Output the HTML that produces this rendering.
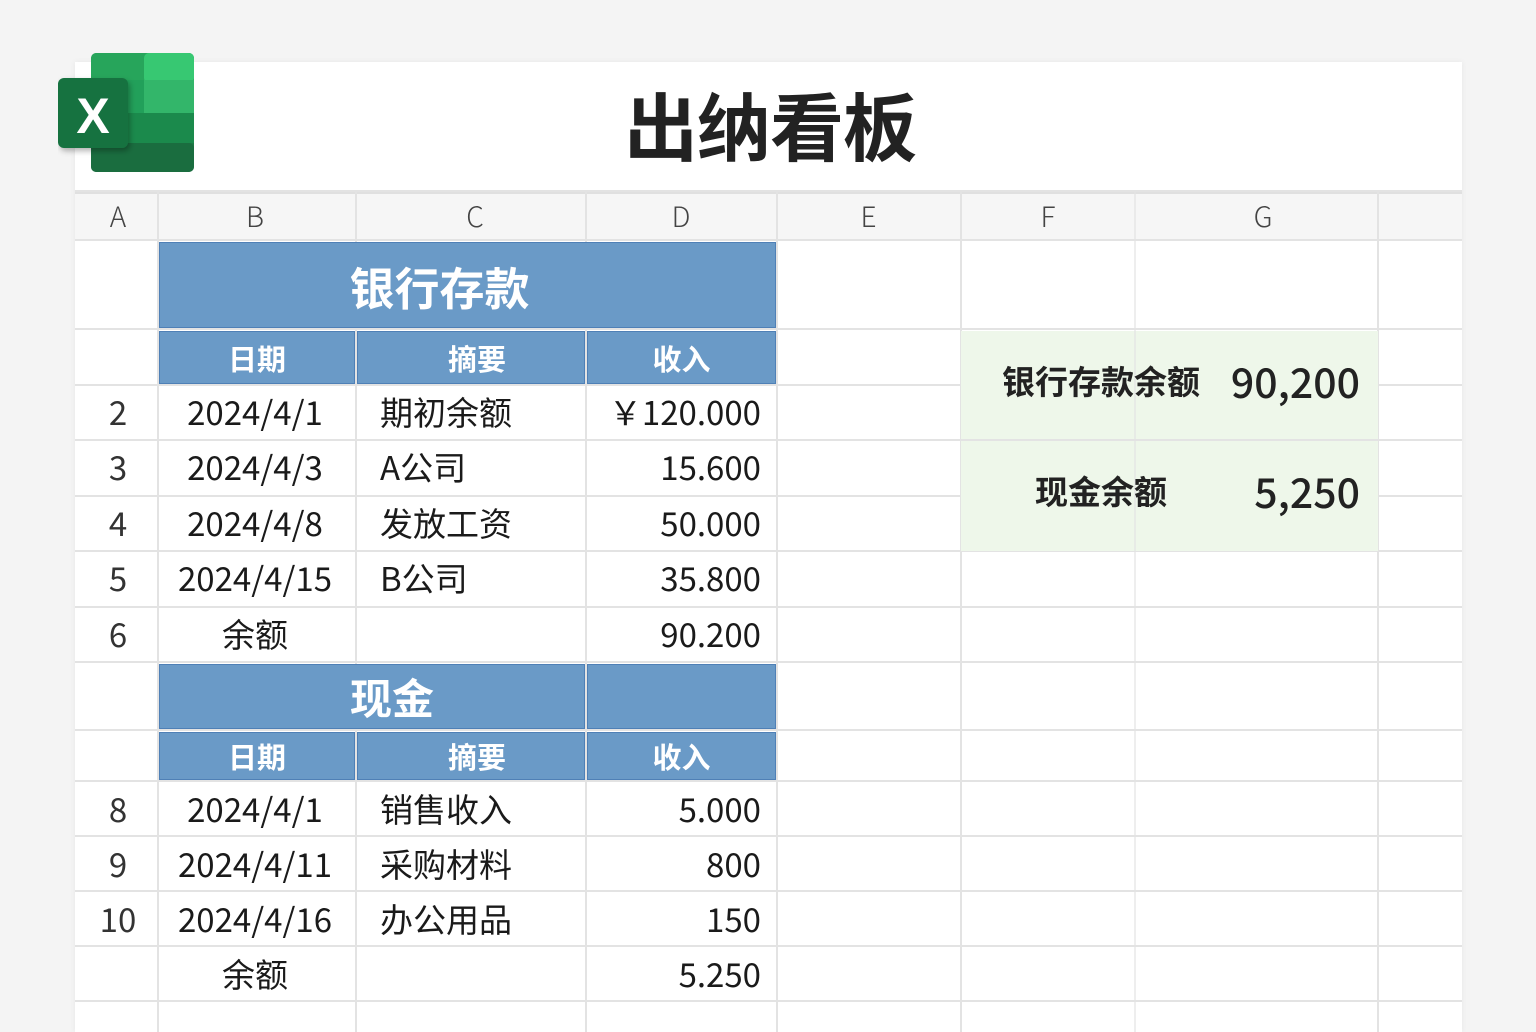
<!DOCTYPE html>
<html><head><meta charset="utf-8"><style>
*{margin:0;padding:0;box-sizing:border-box}
body{width:1536px;height:1024px;background:#f4f4f4;position:relative;overflow:hidden;font-family:"Liberation Sans","Noto Sans CJK SC",sans-serif;color:#1a1a1a}
.sheet{position:absolute;left:75px;top:62px;width:1387px;height:970px;background:#fff;box-shadow:0 0 6px rgba(0,0,0,.06)}
.title{position:absolute;left:600px;top:70px;width:340px;text-align:center;font:bold 74px "Noto Sans CJK SC",sans-serif;color:#222;letter-spacing:-1px}
.hl{position:absolute;left:75px;width:1387px;height:2px;background:#e3e3e3}
.vl{position:absolute;top:192px;width:2px;height:840px;background:#e3e3e3}
.colhdr{position:absolute;top:192px;left:75px;width:1387px;height:48px;background:#f6f6f6;border-top:2px solid #e0e0e0}
.c{position:absolute;display:flex;align-items:center;font-family:"Noto Sans CJK SC",sans-serif;font-size:33px;white-space:nowrap}
.ch{justify-content:center;font-size:28px;color:#444;font-weight:300}
.blue{position:absolute;background:#6a9ac7;border:1px solid #4f80b6;color:#fff;font-weight:bold;display:flex;align-items:center;justify-content:center;font-family:"Noto Sans CJK SC",sans-serif}
.num{justify-content:center;color:#333}
.r{justify-content:flex-end}
.green{position:absolute;left:961px;top:331px;width:417px;height:220px;background:#eef7ea;z-index:1}
.b{font-weight:bold;color:#222;z-index:2}
</style></head><body>
<div class="sheet"></div>
<div class="title">出纳看板</div>

<svg style="position:absolute;left:58px;top:52px" width="140" height="124" viewBox="0 0 140 124">
<defs><filter id="s" x="-20%" y="-20%" width="150%" height="150%"><feDropShadow dx="2" dy="3" stdDeviation="3" flood-opacity=".3"/></filter></defs>
<rect x="33" y="1" width="103" height="119" rx="6" fill="#1d7a45"/>
<rect x="33" y="1" width="103" height="30" fill="#27a55b" rx="5"/>
<rect x="86" y="1" width="50" height="30" fill="#37c872" rx="5"/>
<rect x="33" y="28" width="103" height="33" fill="#22a05a"/>
<rect x="86" y="28" width="50" height="33" fill="#33b66a"/>
<rect x="33" y="61" width="103" height="30" fill="#1b8a4c"/>
<rect x="33" y="91" width="103" height="29" fill="#1a6d3f" rx="5"/>
<rect x="0" y="26" width="70" height="70" rx="6" fill="#177240" filter="url(#s)"/>
<text x="35" y="81" text-anchor="middle" font-family="Liberation Sans" font-weight="bold" font-size="50" fill="#fff">X</text>
</svg>

<div class="colhdr"></div>
<div class="green"></div>

<div class="hl" style="top:190px"></div>
<div class="hl" style="top:239px"></div>
<div class="hl" style="top:328px"></div>
<div class="hl" style="top:384px"></div>
<div class="hl" style="top:439px;z-index:1"></div>
<div class="hl" style="top:495px"></div>
<div class="hl" style="top:550px"></div>
<div class="hl" style="top:606px"></div>
<div class="hl" style="top:661px"></div>
<div class="hl" style="top:729px"></div>
<div class="hl" style="top:780px"></div>
<div class="hl" style="top:835px"></div>
<div class="hl" style="top:890px"></div>
<div class="hl" style="top:945px"></div>
<div class="hl" style="top:1000px"></div>
<div class="vl" style="left:157px"></div>
<div class="vl" style="left:355px"></div>
<div class="vl" style="left:585px"></div>
<div class="vl" style="left:776px"></div>
<div class="vl" style="left:960px"></div>
<div class="vl" style="left:1134px;z-index:1;opacity:.6"></div>
<div class="vl" style="left:1377px"></div>

<div class="c ch" style="left:75px;top:192px;width:86px;height:48px">A</div>
<div class="c ch" style="left:158px;top:192px;width:194px;height:48px">B</div>
<div class="c ch" style="left:356px;top:192px;width:238px;height:48px">C</div>
<div class="c ch" style="left:586px;top:192px;width:190px;height:48px">D</div>
<div class="c ch" style="left:776px;top:192px;width:185px;height:48px">E</div>
<div class="c ch" style="left:961px;top:192px;width:174px;height:48px">F</div>
<div class="c ch" style="left:1135px;top:192px;width:256px;height:48px">G</div>

<div class="blue" style="left:159px;top:242px;width:617px;height:86px;font-size:45px;padding-right:56px">银行存款</div>
<div class="blue" style="left:159px;top:331px;width:196px;height:53px;font-size:29px">日期</div>
<div class="blue" style="left:357px;top:331px;width:228px;height:53px;font-size:29px;padding-left:12px">摘要</div>
<div class="blue" style="left:587px;top:331px;width:189px;height:53px;font-size:29px">收入</div>

<div class="c num" style="left:75px;top:384px;width:86px;height:54px">2</div>
<div class="c num" style="left:75px;top:439px;width:86px;height:54px">3</div>
<div class="c num" style="left:75px;top:495px;width:86px;height:54px">4</div>
<div class="c num" style="left:75px;top:550px;width:86px;height:54px">5</div>
<div class="c num" style="left:75px;top:606px;width:86px;height:54px">6</div>

<div class="c" style="left:158px;top:384px;width:194px;height:54px;justify-content:center">2024/4/1</div>
<div class="c" style="left:158px;top:439px;width:194px;height:54px;justify-content:center">2024/4/3</div>
<div class="c" style="left:158px;top:495px;width:194px;height:54px;justify-content:center">2024/4/8</div>
<div class="c" style="left:158px;top:550px;width:194px;height:54px;justify-content:center">2024/4/15</div>
<div class="c" style="left:158px;top:606px;width:194px;height:54px;justify-content:center">余额</div>

<div class="c" style="left:380px;top:384px;height:54px">期初余额</div>
<div class="c" style="left:380px;top:439px;height:54px">A公司</div>
<div class="c" style="left:380px;top:495px;height:54px">发放工资</div>
<div class="c" style="left:380px;top:550px;height:54px">B公司</div>

<div class="c r" style="left:586px;top:384px;width:175px;height:54px">￥120.000</div>
<div class="c r" style="left:586px;top:439px;width:175px;height:54px">15.600</div>
<div class="c r" style="left:586px;top:495px;width:175px;height:54px">50.000</div>
<div class="c r" style="left:586px;top:550px;width:175px;height:54px">35.800</div>
<div class="c r" style="left:586px;top:606px;width:175px;height:54px">90.200</div>

<div class="blue" style="left:159px;top:664px;width:426px;height:65px;font-size:42px;padding-left:40px">现金</div>
<div class="blue" style="left:587px;top:664px;width:189px;height:65px"></div>
<div class="blue" style="left:159px;top:732px;width:196px;height:48px;font-size:29px">日期</div>
<div class="blue" style="left:357px;top:732px;width:228px;height:48px;font-size:29px;padding-left:12px">摘要</div>
<div class="blue" style="left:587px;top:732px;width:189px;height:48px;font-size:29px">收入</div>

<div class="c num" style="left:75px;top:781px;width:86px;height:54px">8</div>
<div class="c num" style="left:75px;top:836px;width:86px;height:54px">9</div>
<div class="c num" style="left:75px;top:891px;width:86px;height:54px">10</div>

<div class="c" style="left:158px;top:781px;width:194px;height:54px;justify-content:center">2024/4/1</div>
<div class="c" style="left:158px;top:836px;width:194px;height:54px;justify-content:center">2024/4/11</div>
<div class="c" style="left:158px;top:891px;width:194px;height:54px;justify-content:center">2024/4/16</div>
<div class="c" style="left:158px;top:946px;width:194px;height:54px;justify-content:center">余额</div>

<div class="c" style="left:380px;top:781px;height:54px">销售收入</div>
<div class="c" style="left:380px;top:836px;height:54px">采购材料</div>
<div class="c" style="left:380px;top:891px;height:54px">办公用品</div>

<div class="c r" style="left:586px;top:781px;width:175px;height:54px">5.000</div>
<div class="c r" style="left:586px;top:836px;width:175px;height:54px">800</div>
<div class="c r" style="left:586px;top:891px;width:175px;height:54px">150</div>
<div class="c r" style="left:586px;top:946px;width:175px;height:54px">5.250</div>

<div class="c b" style="left:961px;top:350px;width:280px;height:60px;justify-content:center;font-size:33px">银行存款余额</div>
<div class="c b r" style="left:1200px;top:350px;width:160px;height:60px;font-size:41px;font-weight:500">90,200</div>
<div class="c b" style="left:961px;top:460px;width:280px;height:60px;justify-content:center;font-size:33px">现金余额</div>
<div class="c b r" style="left:1200px;top:460px;width:160px;height:60px;font-size:41px;font-weight:500">5,250</div>
</body></html>
